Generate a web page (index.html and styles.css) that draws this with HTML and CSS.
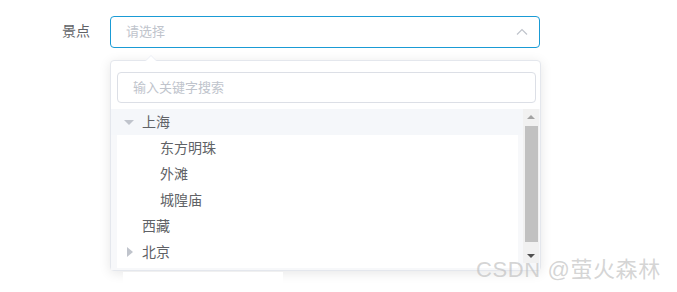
FILE: index.html
```html
<!DOCTYPE html>
<html lang="zh-CN">
<head>
<meta charset="utf-8">
<title>景点选择</title>
<link rel="stylesheet" href="styles.css">
</head>
<body>
<div class="page">
  <div class="form-row">
    <label class="form-label">景点</label>
    <div class="select-wrap">
      <div class="select">
        <span class="placeholder">请选择</span>
        <svg class="chevron" width="12" height="8" viewBox="0 0 12 8"><polyline points="1,6.5 6,1.5 11,6.5" fill="none" stroke="#c0c4cc" stroke-width="1.2"/></svg>
      </div>
      <div class="dropdown">
        <div class="popper-arrow"></div>
        <div class="search">
          <span class="search-placeholder">输入关键字搜索</span>
        </div>
        <div class="scroll-area">
          <div class="tree">
            <div class="node node-current">
              <span class="caret caret-down"></span><span class="label">上海</span>
            </div>
            <div class="node level-2"><span class="caret caret-none"></span><span class="label">东方明珠</span></div>
            <div class="node level-2"><span class="caret caret-none"></span><span class="label">外滩</span></div>
            <div class="node level-2"><span class="caret caret-none"></span><span class="label">城隍庙</span></div>
            <div class="node"><span class="caret caret-none"></span><span class="label">西藏</span></div>
            <div class="node"><span class="caret caret-right"></span><span class="label">北京</span></div>
          </div>
          <div class="scrollbar">
            <div class="sb-btn"><span class="sb-up"></span></div>
            <div class="sb-thumb"></div>
            <div class="sb-btn sb-btn-bottom"><span class="sb-down"></span></div>
          </div>
        </div>
      </div>
    </div>
  </div>
  <div class="mask"></div>
  <div class="watermark">CSDN @萤火森林</div>
</div>
</body>
</html>
```

FILE: styles.css
```css
* { box-sizing: border-box; }
html, body { margin: 0; padding: 0; background: #fff; }
body {
  font-family: "Noto Sans CJK SC", "Noto Sans", sans-serif;
  color: #606266;
  width: 677px;
  height: 292px;
  overflow: hidden;
}
.page { position: relative; width: 677px; height: 292px; }
.form-row {
  display: flex;
  align-items: flex-start;
  padding-top: 16px;
}
.form-label {
  width: 90px;
  margin-right: 20px;
  text-align: right;
  font-size: 14px;
  line-height: 28px;
  color: #606266;
}
.select-wrap { position: relative; width: 431px; }
.select {
  width: 430px;
  height: 32px;
  border: 1px solid #1a9bd5;
  border-radius: 4px;
  display: flex;
  align-items: center;
  justify-content: space-between;
  padding: 0 11px 0 15px;
}
.placeholder { font-size: 13px; color: #c0c4cc; line-height: 18px; margin-top: -3px; }
.chevron { display: block; margin-top: -1px; }
.dropdown {
  position: relative;
  margin-top: 12px;
  width: 431px;
  border: 1px solid #e4e7ed;
  border-radius: 4px;
  background: #fff;
  box-shadow: 0 2px 12px 0 rgba(0,0,0,.1);
  padding-top: 11px;
}
.popper-arrow {
  position: absolute;
  top: -6px;
  left: 34px;
  width: 0; height: 0;
  border-left: 6px solid transparent;
  border-right: 6px solid transparent;
  border-bottom: 6px solid #ebeef5;
}
.popper-arrow::after {
  content: "";
  position: absolute;
  left: -6px;
  top: 1px;
  border-left: 6px solid transparent;
  border-right: 6px solid transparent;
  border-bottom: 6px solid #fff;
}
.search {
  margin: 0 4px 0 6px;
  height: 31px;
  border: 1px solid #dcdfe6;
  border-radius: 4px;
  display: flex;
  align-items: center;
  padding-left: 15px;
}
.search-placeholder { font-size: 13px; color: #c0c4cc; line-height: 18px; margin-top: -2px; }
.scroll-area {
  margin-top: 6px;
  height: 161px;
  background: #f7f8fa;
  display: flex;
  padding: 0 1px 2px 6px;
  gap: 5px;
}
.tree { flex: 1; background: #fff; }
.node {
  height: 26px;
  display: flex;
  align-items: center;
  font-size: 14px;
  color: #606266;
}
.node-current { background: #f5f7fa; margin-left: -6px; padding-left: 6px; margin-right: -6px; }
.level-2 { padding-left: 18px; }
.caret {
  width: 25px;
  height: 26px;
  position: relative;
  flex: none;
}
.caret-down::before {
  content: "";
  position: absolute;
  left: 7px; top: 11px;
  border-left: 5px solid transparent;
  border-right: 5px solid transparent;
  border-top: 5px solid #c0c4cc;
}
.caret-right::before {
  content: "";
  position: absolute;
  left: 10px; top: 8px;
  border-top: 5px solid transparent;
  border-bottom: 5px solid transparent;
  border-left: 6px solid #c0c4cc;
}
.label { line-height: 20px; margin-top: -2px; }
.scrollbar {
  width: 16px;
  height: 154px;
  background: #f1f1f1;
  display: flex;
  flex-direction: column;
  position: relative;
  z-index: 1;
}
.sb-btn {
  height: 15px;
  display: flex;
  align-items: center;
  justify-content: center;
  flex: none;
}
.sb-btn-bottom { margin-top: 6px; }
.sb-up {
  border-left: 4px solid transparent;
  border-right: 4px solid transparent;
  border-bottom: 4px solid #a3a3a3;
}
.sb-down {
  border-left: 4px solid transparent;
  border-right: 4px solid transparent;
  border-top: 4px solid #505050;
}
.sb-thumb {
  margin: 2px 1px 0 2px;
  height: 116px;
  background: #c1c1c1;
  flex: none;
}
.mask {
  position: absolute;
  left: 123px;
  top: 272px;
  width: 160px;
  height: 20px;
  background: #fff;
}
.watermark {
  position: absolute;
  left: 476px;
  top: 256px;
  font-family: "Liberation Sans", "Noto Sans CJK SC", sans-serif;
  font-size: 22px;
  letter-spacing: 0.6px;
  line-height: 28px;
  color: rgba(185,185,185,0.6);
  white-space: nowrap;
}
```
